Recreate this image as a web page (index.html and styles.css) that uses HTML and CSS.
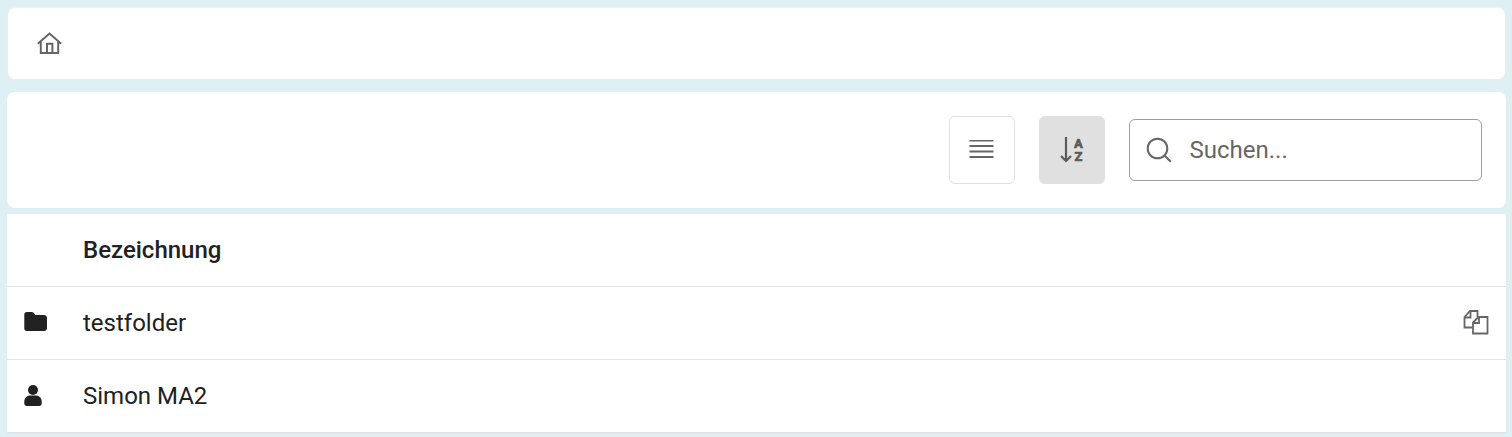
FILE: index.html
```html
<!DOCTYPE html>
<html lang="de">
<head>
<meta charset="utf-8">
<title>Ordner</title>
<link rel="stylesheet" href="styles.css">
</head>
<body>
<nav class="card crumbs">
  <svg class="home" width="26" height="26" viewBox="0 0 26 26" fill="none" stroke="#666" stroke-width="2">
    <path d="M.8 12.800 12.500 2.500l11.700 10.300"/>
    <path d="M3.800 10.500V22h17.400V10.500"/>
    <path d="M10 22V12.700h5.400V22"/>
  </svg>
</nav>
<section class="card toolbar">
  <button class="tool outlined" type="button" aria-label="Liste">
    <svg width="26" height="20" viewBox="0 0 26 20" fill="none" stroke="#666" stroke-width="2">
      <path d="M.5 .5h24M.5 6h24M.5 11.500h24M.5 17h24"/>
    </svg>
  </button>
  <button class="tool active" type="button" aria-label="Sortieren">
    <svg width="28" height="28" viewBox="0 0 28 28" fill="none" stroke="#5c5c5c" stroke-width="2.200">
      <path d="M8 1v24M3 20l5 5 5-5"/>
      <text class="az" x="20.500" y="11.500" text-anchor="middle">A</text>
      <text class="az" x="20.500" y="24.500" text-anchor="middle">Z</text>
    </svg>
  </button>
  <label class="search">
    <svg width="26" height="26" viewBox="0 0 26 26" fill="none" stroke="#666" stroke-width="2">
      <circle cx="11.500" cy="11.500" r="9.800"/>
      <path d="m18.800 18.800 6 6"/>
    </svg>
    <input class="search-input" type="text" placeholder="Suchen...">
  </label>
</section>
<section class="table">
  <div class="row head">
    <span class="cell-icon"></span>
    <span class="name">Bezeichnung</span>
  </div>
  <div class="row">
    <span class="cell-icon">
      <svg width="24" height="24" viewBox="0 0 24 24" fill="#212121">
        <path d="M1.300 3.500C1.300 2 2.300 1 3.800 1h5c.8 0 1.300.3 1.800.8L12.500 4h8C22.800 4 24 5.200 24 7v10c0 1.800-1.200 3-3 3H3.800C2.300 20 1.300 19 1.300 17.500z"/>
      </svg>
    </span>
    <span class="name">testfolder</span>
    <svg class="copy" width="26" height="26" viewBox="0 0 26 26" fill="none" stroke="#666" stroke-width="1.800">
      <path d="M9 17.500H1.500V7L7 1h7.500v6"/>
      <path d="M1.500 7.500H7.500V1"/>
      <path d="M10 12.500 15.500 7H24.500v16.500H10z" fill="#fff"/>
      <path d="M10 13h6V7"/>
    </svg>
  </div>
  <div class="row">
    <span class="cell-icon">
      <svg width="20" height="24" viewBox="0 0 20 24" fill="#212121">
        <circle cx="10" cy="6" r="5"/>
        <path d="M1.300 17.500c0-3.500 2.700-6 5.700-6h6c3 0 5.700 2.500 5.700 6v2c0 1.500-1 2.500-2.500 2.500h-12.400C2.300 22 1.300 21 1.300 19.500z"/>
      </svg>
    </span>
    <span class="name">Simon MA2</span>
  </div>
</section>
</body>
</html>
```

FILE: styles.css
```css
* { box-sizing: border-box; }

html, body { height: 100%; }

body {
  margin: 0;
  padding: 7px 6px 5px 7px;
  background: #dff0f4;
  font-family: Roboto, "Liberation Sans", sans-serif;
  color: #212121;
  overflow: hidden;
}

.card {
  background: #fff;
  border-radius: 8px;
}

.crumbs {
  height: 73px;
  padding-left: 29px;
  display: flex;
  align-items: center;
  border: 1px solid #e8eef0;
  border-top-color: #e8f2f5;
}

.home { display: block; }

.toolbar {
  margin-top: 12px;
  height: 116px;
  padding-right: 24px;
  display: flex;
  align-items: center;
  justify-content: flex-end;
  gap: 24px;
}

.tool {
  width: 66px;
  height: 68px;
  padding: 0;
  border: 1px solid transparent;
  border-radius: 6px;
  background: none;
  display: flex;
  align-items: center;
  justify-content: center;
}

.outlined { border-color: #e0e0e0; }

.active { background: #e0e0e0; border-color: #e0e0e0; }

.az {
  font: 900 13px Roboto, sans-serif;
  fill: #5c5c5c;
  stroke: #5c5c5c;
  stroke-width: 0.4;
}

.search {
  width: 353px;
  height: 62px;
  padding-left: 16px;
  display: flex;
  align-items: center;
  gap: 17.5px;
  border: 1px solid #9e9e9e;
  border-radius: 6px;
}

.search-input {
  flex: 1;
  min-width: 0;
  border: 0;
  outline: 0;
  padding: 0;
  background: none;
  font: 400 24px Roboto, sans-serif;
  color: #666;
}

.search-input::placeholder { color: #666; opacity: 1; }

.table {
  margin-top: 6px;
  background: #fff;
  border-bottom: 1px solid #e0e0e0;
}

.row {
  height: 73px;
  padding-right: 17px;
  display: flex;
  align-items: center;
  border-top: 1px solid #e4e4e4;
  font-size: 24px;
}

.head {
  height: 72px;
  border-top: 0;
  font-weight: 500;
}

.cell-icon {
  width: 76px;
  padding-left: 16px;
  display: flex;
  align-items: center;
}

.name { flex: 1; }

.copy { display: block; }
```
